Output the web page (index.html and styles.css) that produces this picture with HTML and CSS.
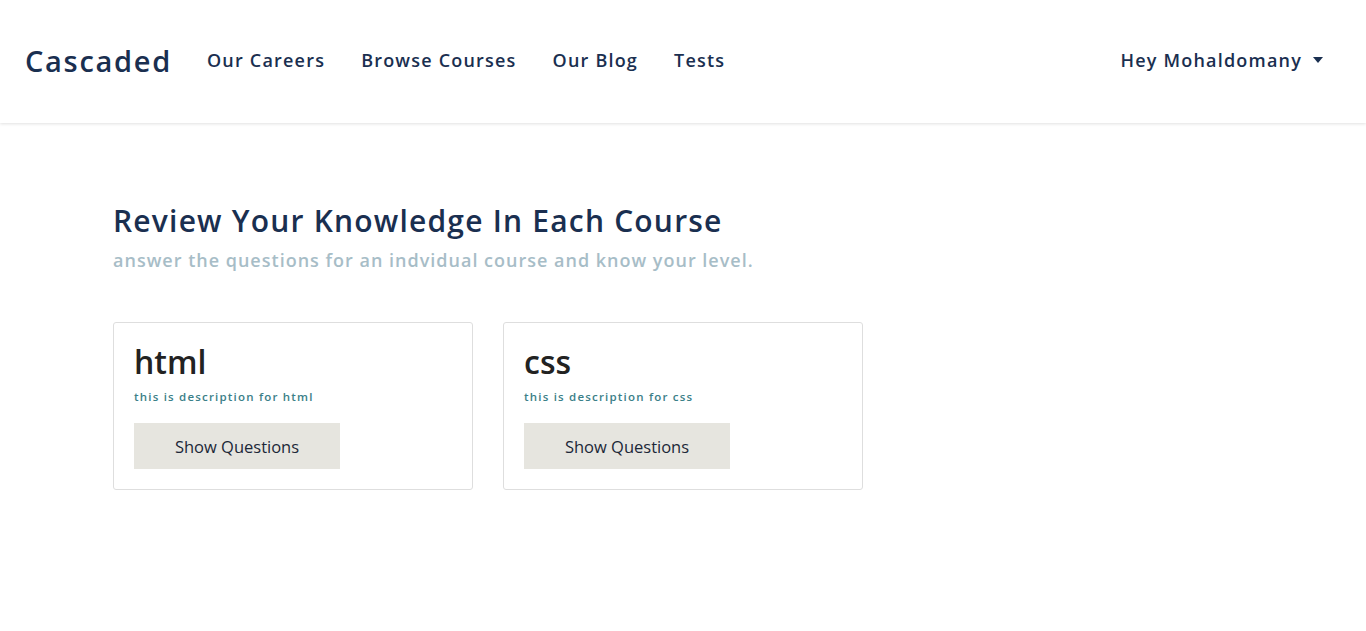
FILE: index.html
```html
<!DOCTYPE html>
<html lang="en">
<head>
<meta charset="utf-8">
<title>Cascaded - Tests</title>
<link rel="stylesheet" href="styles.css">
</head>
<body>
<header class="navbar">
  <a class="brand" href="#">Cascaded</a>
  <nav class="nav-links">
    <a href="#">Our Careers</a>
    <a href="#">Browse Courses</a>
    <a href="#">Our Blog</a>
    <a href="#">Tests</a>
  </nav>
  <div class="user">
    <a href="#" class="user-toggle">Hey Mohaldomany<span class="caret"></span></a>
  </div>
</header>
<main class="content">
  <h1 class="title">Review Your Knowledge In Each Course</h1>
  <p class="subtitle">answer the questions for an indvidual course and know your level.</p>
  <div class="cards">
    <div class="card">
      <h2 class="card-title">html</h2>
      <p class="card-desc">this is description for html</p>
      <a href="#" class="btn">Show Questions</a>
    </div>
    <div class="card">
      <h2 class="card-title">css</h2>
      <p class="card-desc">this is description for css</p>
      <a href="#" class="btn">Show Questions</a>
    </div>
  </div>
</main>
</body>
</html>
```
FILE: styles.css
```css
* { box-sizing: border-box; }
body {
  margin: 0;
  font-family: "Open Sans", "Noto Sans", sans-serif;
  background: #fff;
  color: #1a2f50;
}
a { text-decoration: none; color: inherit; }

.navbar {
  height: 123px;
  display: flex;
  align-items: center;
  padding: 0 43px 4px 25px;
  background: #fff;
  box-shadow: 0 1px 3px rgba(0,0,0,0.12);
}
.brand {
  font-size: 29px;
  font-weight: 600;
  letter-spacing: 1.7px;
  color: #1a2f50;
  margin-right: 35px;
  padding-top: 2px;
}
.nav-links {
  display: flex;
  gap: 36px;
}
.nav-links a, .user-toggle {
  font-size: 18px;
  font-weight: 600;
  letter-spacing: 1.2px;
  color: #1a2f50;
}
.user { margin-left: auto; }
.user-toggle {
  display: flex;
  align-items: center;
}
.caret {
  display: inline-block;
  margin-left: 11px;
  width: 0;
  height: 0;
  border-top: 6px solid #1a2f50;
  border-left: 5px solid transparent;
  border-right: 5px solid transparent;
}

.content {
  padding: 78px 113px;
}
.title {
  margin: 0;
  font-size: 30px;
  font-weight: 600;
  letter-spacing: 1.2px;
  line-height: 40px;
  color: #1a2f50;
}
.subtitle {
  margin: 0;
  margin-top: 7px;
  font-size: 18px;
  font-weight: 600;
  letter-spacing: 1px;
  color: #a7bdc7;
}
.cards {
  display: flex;
  gap: 30px;
  margin-top: 50px;
}
.card {
  width: 360px;
  height: 168px;
  border: 1px solid #dedede;
  border-radius: 3px;
  padding: 20px 20px 20px;
}
.card-title {
  margin: 0;
  font-size: 32px;
  font-weight: 600;
  line-height: 38px;
  color: #222;
}
.card-desc {
  margin: 8px 0 0;
  font-size: 11.5px;
  font-weight: 600;
  letter-spacing: 1.2px;
  color: #3b8088;
}
.btn {
  display: flex;
  align-items: center;
  justify-content: center;
  margin-top: 19px;
  width: 206px;
  height: 46px;
  background: #e6e5df;
  font-size: 16.5px;
  color: #1c2838;
}
```
